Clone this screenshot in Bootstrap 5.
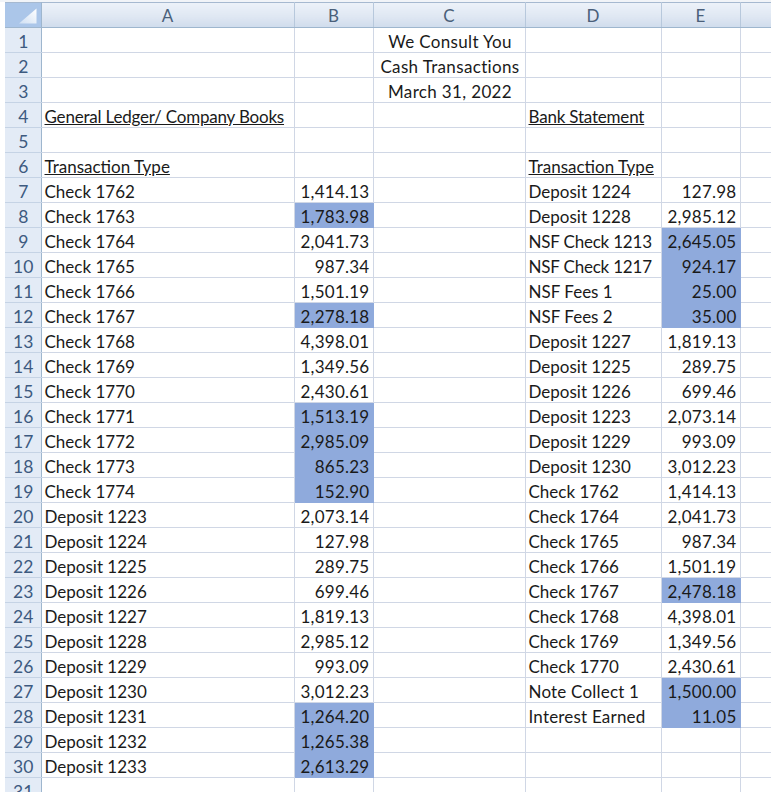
<!DOCTYPE html>
<html lang="en"><head><meta charset="utf-8"><title>Cash Transactions</title>
<link href="https://cdn.jsdelivr.net/npm/bootstrap@5.3.0/dist/css/bootstrap.min.css" rel="stylesheet">
<style>
html,body{margin:0;background:#fff;overflow:hidden;height:792px}
.sheet-wrap{padding:2px 0 0 5px;width:771px;background:linear-gradient(#f1f4f8 2px,#fff 2px)}
.sheet{table-layout:fixed;width:766px;border-collapse:collapse;margin:0;font-family:Lato,"Liberation Sans",sans-serif;font-size:17px;color:#1a1a1a;}
.sheet td,.sheet th{height:25px;padding:3px 3px 0 3px;border:1px solid #d0d7e5;border-width:0 1px 1px 0;font-weight:400;white-space:nowrap;line-height:21px;overflow:hidden;background:#fff;vertical-align:top}
.sheet thead th{height:25px;text-align:center;color:#4a5f7a;background:linear-gradient(#edf2f9,#e0e8f3 55%,#d0dcec);border-right-color:#b7c8dc;border-bottom-color:#9eb6ce;box-shadow:inset 0 1px 0 #a6b9d0}
.sheet tbody th{text-align:center;color:#3d5a80;background:#e3ebf6;border-right-color:#9eb6ce;border-bottom-color:#c5d3e5;padding:3px 0 0 1px;font-size:17.5px}
.sheet thead th.corner{padding:0;background:#abc6e9;border-right-color:#9eb6ce}
.corner svg{display:block;width:36px;height:24px}
.sheet td.num{text-align:right;letter-spacing:.25px}
.sheet td.hl{background:#8faadc;text-align:right;border-color:#8faadc;letter-spacing:.25px}
.sheet td.mid{text-align:center;letter-spacing:.35px;padding-left:5px;padding-right:3px}
.sheet td.und{text-decoration:underline}
.sheet td.tight{letter-spacing:-.2px}
.sheet td.wide{letter-spacing:.2px}
</style></head><body>
<div class="sheet-wrap">
<table class="sheet table-borderless">
<colgroup><col style="width:36px"><col style="width:253px"><col style="width:79px"><col style="width:152px"><col style="width:136px"><col style="width:79px"><col style="width:31px"></colgroup>
<thead><tr><th class="corner"><svg viewBox="0 0 36 24"><defs><linearGradient id="tri" x1="0" y1="1" x2="1" y2="0"><stop offset="0" stop-color="#cfdff3"/><stop offset="1" stop-color="#ffffff"/></linearGradient></defs><path d="M14 21.500 L31.500 6.500 V21.500 Z" fill="url(#tri)"/></svg></th><th>A</th><th>B</th><th>C</th><th>D</th><th>E</th><th></th></tr></thead>
<tbody>
<tr><th>1</th><td></td><td></td><td class="mid">We Consult You</td><td></td><td></td><td></td></tr>
<tr><th>2</th><td></td><td></td><td class="mid">Cash Transactions</td><td></td><td></td><td></td></tr>
<tr><th>3</th><td></td><td></td><td class="mid">March 31, 2022</td><td></td><td></td><td></td></tr>
<tr><th>4</th><td class="und tight">General Ledger/ Company Books</td><td></td><td></td><td class="und tight">Bank Statement</td><td></td><td></td></tr>
<tr><th>5</th><td></td><td></td><td></td><td></td><td></td><td></td></tr>
<tr><th>6</th><td class="und">Transaction Type</td><td></td><td></td><td class="und">Transaction Type</td><td></td><td></td></tr>
<tr><th>7</th><td>Check 1762</td><td class="num">1,414.13</td><td></td><td>Deposit 1224</td><td class="num">127.98</td><td></td></tr>
<tr><th>8</th><td>Check 1763</td><td class="hl">1,783.98</td><td></td><td>Deposit 1228</td><td class="num">2,985.12</td><td></td></tr>
<tr><th>9</th><td>Check 1764</td><td class="num">2,041.73</td><td></td><td class="tight">NSF Check 1213</td><td class="hl">2,645.05</td><td></td></tr>
<tr><th>10</th><td>Check 1765</td><td class="num">987.34</td><td></td><td class="tight">NSF Check 1217</td><td class="hl">924.17</td><td></td></tr>
<tr><th>11</th><td>Check 1766</td><td class="num">1,501.19</td><td></td><td>NSF Fees 1</td><td class="hl">25.00</td><td></td></tr>
<tr><th>12</th><td>Check 1767</td><td class="hl">2,278.18</td><td></td><td>NSF Fees 2</td><td class="hl">35.00</td><td></td></tr>
<tr><th>13</th><td>Check 1768</td><td class="num">4,398.01</td><td></td><td>Deposit 1227</td><td class="num">1,819.13</td><td></td></tr>
<tr><th>14</th><td>Check 1769</td><td class="num">1,349.56</td><td></td><td>Deposit 1225</td><td class="num">289.75</td><td></td></tr>
<tr><th>15</th><td>Check 1770</td><td class="num">2,430.61</td><td></td><td>Deposit 1226</td><td class="num">699.46</td><td></td></tr>
<tr><th>16</th><td>Check 1771</td><td class="hl">1,513.19</td><td></td><td>Deposit 1223</td><td class="num">2,073.14</td><td></td></tr>
<tr><th>17</th><td>Check 1772</td><td class="hl">2,985.09</td><td></td><td>Deposit 1229</td><td class="num">993.09</td><td></td></tr>
<tr><th>18</th><td>Check 1773</td><td class="hl">865.23</td><td></td><td>Deposit 1230</td><td class="num">3,012.23</td><td></td></tr>
<tr><th>19</th><td>Check 1774</td><td class="hl">152.90</td><td></td><td>Check 1762</td><td class="num">1,414.13</td><td></td></tr>
<tr><th>20</th><td>Deposit 1223</td><td class="num">2,073.14</td><td></td><td>Check 1764</td><td class="num">2,041.73</td><td></td></tr>
<tr><th>21</th><td>Deposit 1224</td><td class="num">127.98</td><td></td><td>Check 1765</td><td class="num">987.34</td><td></td></tr>
<tr><th>22</th><td>Deposit 1225</td><td class="num">289.75</td><td></td><td>Check 1766</td><td class="num">1,501.19</td><td></td></tr>
<tr><th>23</th><td>Deposit 1226</td><td class="num">699.46</td><td></td><td>Check 1767</td><td class="hl">2,478.18</td><td></td></tr>
<tr><th>24</th><td>Deposit 1227</td><td class="num">1,819.13</td><td></td><td>Check 1768</td><td class="num">4,398.01</td><td></td></tr>
<tr><th>25</th><td>Deposit 1228</td><td class="num">2,985.12</td><td></td><td>Check 1769</td><td class="num">1,349.56</td><td></td></tr>
<tr><th>26</th><td>Deposit 1229</td><td class="num">993.09</td><td></td><td>Check 1770</td><td class="num">2,430.61</td><td></td></tr>
<tr><th>27</th><td>Deposit 1230</td><td class="num">3,012.23</td><td></td><td class="wide">Note Collect 1</td><td class="hl">1,500.00</td><td></td></tr>
<tr><th>28</th><td>Deposit 1231</td><td class="hl">1,264.20</td><td></td><td class="wide">Interest Earned</td><td class="hl">11.05</td><td></td></tr>
<tr><th>29</th><td>Deposit 1232</td><td class="hl">1,265.38</td><td></td><td></td><td></td><td></td></tr>
<tr><th>30</th><td>Deposit 1233</td><td class="hl">2,613.29</td><td></td><td></td><td></td><td></td></tr>
<tr><th>31</th><td></td><td></td><td></td><td></td><td></td><td></td></tr>
</tbody></table>
</div>
<script src="https://cdn.jsdelivr.net/npm/bootstrap@5.3.0/dist/js/bootstrap.bundle.min.js"></script>
</body></html>
